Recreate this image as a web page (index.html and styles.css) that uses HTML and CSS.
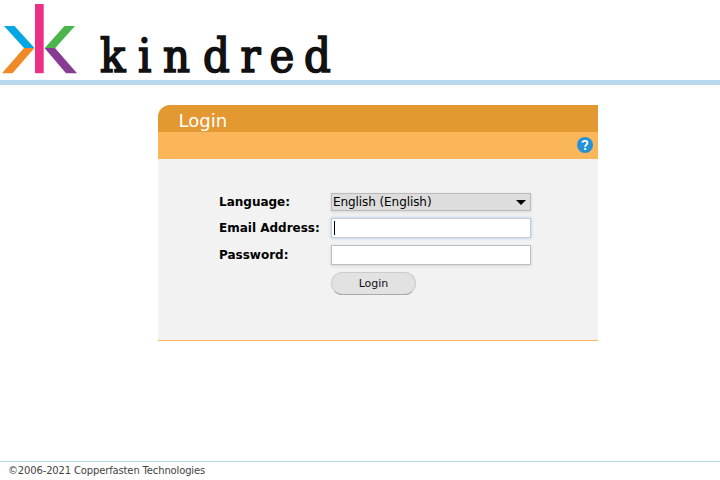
FILE: index.html
```html
<!DOCTYPE html>
<html lang="en">
<head>
<meta charset="utf-8">
<title>Login</title>
<link rel="stylesheet" href="styles.css">
</head>
<body>
<header class="header">
  <svg class="logo" width="340" height="80" viewBox="0 0 340 80">
    <path fill="#ec2e84" d="M35 4h8.700v69.200H35z"/>
    <path fill="#06a6e3" d="M4 26h10.500L34.500 48H24z"/>
    <path fill="#f08a28" d="M24 48h10.500L12.500 73.200H2z"/>
    <path fill="#4ab54b" d="M64.500 26H75L55 48.200H44.500z"/>
    <path fill="#873b92" d="M44.500 48H55L77 73.200H66z"/>
    <text class="wordmark" y="72.300" x="100 138 163 203 240.500 269.500 304">kindred</text>
  </svg>
</header>
<main class="panel">
  <h1 class="title">Login</h1>
  <div class="toolbar">
    <svg width="16" height="16" viewBox="0 0 16 16">
      <circle cx="8" cy="8" r="8" fill="#2593d8"/>
      <path d="M5.400 5.600C5.700 3.300 10.400 3.200 10.400 5.900C10.400 7.600 8.200 7.700 8.200 9.900" fill="none" stroke="#fff" stroke-width="1.900"/>
      <path fill="#fff" d="M7.200 10.900h2v2h-2z"/>
    </svg>
  </div>
  <form class="form">
    <label>Language:</label>
    <div class="field select"><span>English (English)</span><svg width="10" height="5" viewBox="0 0 10 5"><path d="M0 0h10L5 5z"/></svg></div>
    <label class="lower">Email Address:</label>
    <div class="field focused"><span class="caret"></span></div>
    <label class="lower">Password:</label>
    <div class="field"></div>
    <button class="button" type="button">Login</button>
  </form>
</main>
<footer class="footer">©2006-2021 Copperfasten Technologies</footer>
</body>
</html>
```
FILE: styles.css
```css
* { box-sizing: border-box; }
body {
  margin: 0;
  height: 480px;
  display: flex;
  flex-direction: column;
  background: #fff;
  color: #000;
  font-family: "DejaVu Sans", sans-serif;
  font-size: 12px;
  overflow: hidden;
}
.header { height: 85px; border-bottom: 5px solid #b9d8ed; }
.logo { display: block; overflow: visible; }
.wordmark {
  font-family: "DejaVu Serif Condensed", "DejaVu Serif", serif;
  font-stretch: condensed;
  font-size: 46.500px;
  fill: #111;
  stroke: #111;
  stroke-width: 1.700px;
}
.panel {
  width: 440px;
  height: 236px;
  margin: 20px 0 0 158px;
  background: #f2f2f2;
  border-bottom: 1px solid #fcb65a;
  border-top-left-radius: 12px;
  overflow: hidden;
}
.title {
  margin: 0;
  height: 27px;
  padding: 2px 0 0 20.500px;
  background: #e39832;
  color: #fff;
  font-size: 18px;
  font-weight: 400;
  line-height: 27px;
}
.toolbar {
  height: 27px;
  padding: 5px 5px 0;
  display: flex;
  justify-content: flex-end;
  background: #fcb65a;
}
.form {
  display: grid;
  grid-template-columns: 112px 200px;
  grid-template-rows: 18px 20px 20px 23px;
  row-gap: 7px;
  padding: 34px 0 0 61px;
}
.form label { font-weight: 700; line-height: 18px; }
.form .lower { line-height: 20px; }
.field {
  display: flex;
  align-items: center;
  background: #fff;
  border: 1px solid #bbbdbf;
  box-shadow: 0 1px 3px rgba(0, 0, 0, .12);
}
.select {
  justify-content: space-between;
  padding: 0 4px 0 1px;
  background: #ddd;
  border-color: #bbb;
  letter-spacing: -.08px;
}
.focused { border-color: #c3cbd5; box-shadow: 0 0 3px #9fc3f0; }
.caret { width: 1px; height: 14px; margin-left: 2px; background: #000; }
.button {
  grid-column: 2;
  width: 85px;
  padding: 0;
  border: 1px solid #ccc;
  border-bottom-color: #aaa;
  border-radius: 12px;
  background: #e2e2e2;
  color: #111;
  font: 11px "DejaVu Sans", sans-serif;
}
.footer {
  height: 19px;
  margin-top: auto;
  padding: 2px 0 0 8px;
  border-top: 1px solid #bdd5e0;
  color: #444;
  font-size: 10px;
  letter-spacing: -.15px;
  line-height: 14px;
}
```
